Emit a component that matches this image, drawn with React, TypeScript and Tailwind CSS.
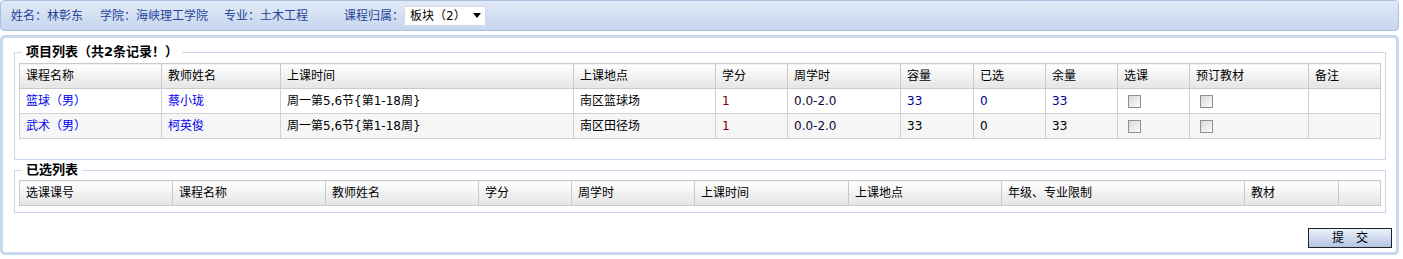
import React from 'react';

const font = { fontFamily: '"DejaVu Sans", "Noto Sans CJK SC", sans-serif' };

type Course = {
  name: string;
  teacher: string;
  time: string;
  place: string;
  credit: string;
  hours: string;
  cap: string;
  chosen: string;
  left: string;
  highlight: boolean;
};

const courses: Course[] = [
  { name: '篮球（男）', teacher: '蔡小珑', time: '周一第5,6节{第1-18周}', place: '南区篮球场', credit: '1', hours: '0.0-2.0', cap: '33', chosen: '0', left: '33', highlight: true },
  { name: '武术（男）', teacher: '柯英俊', time: '周一第5,6节{第1-18周}', place: '南区田径场', credit: '1', hours: '0.0-2.0', cap: '33', chosen: '0', left: '33', highlight: false },
];

const listCols = [
  ['课程名称', 142],
  ['教师姓名', 119],
  ['上课时间', 293],
  ['上课地点', 142],
  ['学分', 72],
  ['周学时', 113],
  ['容量', 73],
  ['已选', 72],
  ['余量', 72],
  ['选课', 72],
  ['预订教材', 119],
  ['备注', 72],
] as const;

const chosenCols = [
  ['选课课号', 153],
  ['课程名称', 153],
  ['教师姓名', 153],
  ['学分', 93],
  ['周学时', 123],
  ['上课时间', 154],
  ['上课地点', 153],
  ['年级、专业限制', 243],
  ['教材', 94],
  ['', 42],
] as const;

function Checkbox() {
  return (
    <span className="ml-[4px] inline-block h-[13px] w-[13px] border border-[#8e8f8f] bg-gradient-to-br from-[#d9d9d9] to-[#fbfbfb] align-middle" />
  );
}

function HeaderRow({ cols }: { cols: readonly (readonly [string, number])[] }) {
  return (
    <tr className="h-[25px]">
      {cols.map(([label], i) => (
        <th
          key={i}
          className="border border-[#cacaca] bg-gradient-to-b from-white to-[#e6e4e4] pl-[6px] text-left font-normal text-black"
        >
          {label}
        </th>
      ))}
    </tr>
  );
}

function Legend({ children }: { children: React.ReactNode }) {
  return (
    <legend className="ml-[3px] px-[4px] text-[13px] leading-[16px] font-bold text-black">
      {children}
    </legend>
  );
}

export default function App() {
  const cell = 'border border-[#d2d2d2] pl-[6px]';

  return (
    <div className="h-[259px] w-[1403px] bg-white text-[12px] leading-[14px]" style={font}>
      <div className="flex h-[31px] w-[1399px] items-center rounded-[4px] border border-[#a9c0df] bg-gradient-to-b from-[#e2eaf6] to-[#c5d6ee] text-[#26449a]">
        <span className="ml-[10px]">姓名：林彰东</span>
        <span className="ml-[17px]">学院：海峡理工学院</span>
        <span className="ml-[16px]">专业：土木工程</span>
        <span className="ml-[36px]">课程归属：</span>
        <div className="flex h-[20px] w-[82px] items-center justify-between border border-[#d4dbe6] bg-white pl-[5px] pr-[4px] text-black">
          <span>板块（2）</span>
          <svg width="8" height="5" viewBox="0 0 8 5">
            <polygon points="0,0 8,0 4,5" fill="#000" />
          </svg>
        </div>
      </div>

      <div className="mt-[4px] flex h-[220px] w-[1399px] flex-col rounded-[5px] border-[3px] border-[#c6d7ee] pl-[11px] pr-[4px] pt-[6px]">
        <fieldset className="mr-[6px] border border-[#c8d8ea] px-[4px] pt-[3px] pb-[20px]">
          <Legend>项目列表（共2条记录！）</Legend>
          <table className="w-[1361px] table-fixed border-collapse">
            <colgroup>
              {listCols.map(([, w], i) => (
                <col key={i} style={{ width: w }} />
              ))}
            </colgroup>
            <thead>
              <HeaderRow cols={listCols} />
            </thead>
            <tbody>
              {courses.map((c, i) => {
                const numColor = c.highlight ? 'text-[#00008b]' : 'text-black';
                return (
                  <tr key={i} className={`h-[25px] ${i % 2 === 1 ? 'bg-[#f6f6f6]' : 'bg-white'}`}>
                    <td className={`${cell} text-[#0000ee]`}>{c.name}</td>
                    <td className={`${cell} text-[#0000ee]`}>{c.teacher}</td>
                    <td className={cell}>{c.time}</td>
                    <td className={cell}>{c.place}</td>
                    <td className={`${cell} text-[#800000]`}>{c.credit}</td>
                    <td className={`${cell} text-[#0a0a3a]`}>{c.hours}</td>
                    <td className={`${cell} ${numColor}`}>{c.cap}</td>
                    <td className={`${cell} ${numColor}`}>{c.chosen}</td>
                    <td className={`${cell} ${numColor}`}>{c.left}</td>
                    <td className={cell}>
                      <Checkbox />
                    </td>
                    <td className={cell}>
                      <Checkbox />
                    </td>
                    <td className={cell}></td>
                  </tr>
                );
              })}
            </tbody>
          </table>
        </fieldset>

        <fieldset className="mt-[2px] mr-[6px] border border-[#c8d8ea] px-[4px] pt-[2px] pb-[6px]">
          <Legend>已选列表</Legend>
          <table className="w-[1361px] table-fixed border-collapse">
            <colgroup>
              {chosenCols.map(([, w], i) => (
                <col key={i} style={{ width: w }} />
              ))}
            </colgroup>
            <thead>
              <HeaderRow cols={chosenCols} />
            </thead>
          </table>
        </fieldset>

        <div className="mt-[15px] flex justify-end">
          <button className="h-[20px] w-[84px] border border-[#222] bg-gradient-to-b from-[#eef3fa] to-[#b2c5e2] text-[12px] text-black">
            提　交
          </button>
        </div>
      </div>
    </div>
  );
}
